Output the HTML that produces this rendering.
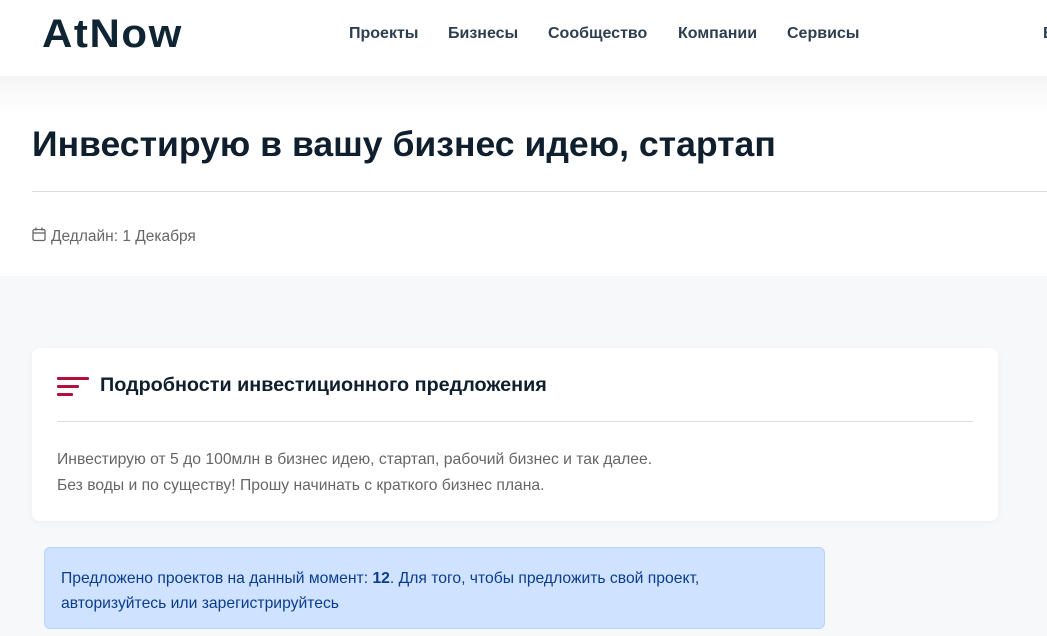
<!DOCTYPE html>
<html><head><meta charset="utf-8"><style>
*{margin:0;padding:0;box-sizing:border-box}
body{width:1047px;height:636px;overflow:hidden;background:#f7f8fa;font-family:"Liberation Sans",sans-serif;position:relative}
.hdr{position:absolute;left:0;top:0;width:1047px;height:76px;background:#fff}
.logo{position:absolute;left:42px;top:12px;font-size:40px;font-weight:bold;color:#0f2533;letter-spacing:1.5px;transform:scaleX(1.05);transform-origin:left}
.nav{position:absolute;top:25px;font-size:16px;font-weight:bold;color:#2d3e50}
.top{position:absolute;left:0;top:76px;width:1047px;height:200px;background:linear-gradient(#f4f4f4,#fbfbfb 20px,#fff 40px)}
h1{position:absolute;left:32px;top:124px;font-size:35.6px;font-weight:bold;color:#0f1f2e}
.hr{position:absolute;left:32px;top:191px;width:1015px;height:1px;background:#dcdcdc}
.dl{position:absolute;left:32px;top:227px;font-size:15.5px;color:#666;letter-spacing:0}
.card{position:absolute;left:32px;top:348px;width:966px;height:173px;background:#fff;border-radius:8px;box-shadow:0 2px 8px rgba(0,0,0,.04)}
.ct{position:absolute;left:68px;top:26px;font-size:19.8px;font-weight:bold;color:#0f1f2e}
.chr{position:absolute;left:25px;top:73px;width:916px;height:1px;background:#ddd}
.cb{position:absolute;left:25px;top:99px;font-size:15.7px;line-height:26px;color:#666}
.info{position:absolute;left:44px;top:547px;width:781px;height:82px;background:#cfe2ff;border:1px solid #b6d4fe;border-radius:6px;padding:18px 110px 18px 16px;font-size:15.7px;line-height:25px;color:#0a3d8f}
</style></head><body>
<div class="hdr">
<div class="logo">AtNow</div>
<div class="nav" style="left:349px">Проекты</div>
<div class="nav" style="left:448px">Бизнесы</div>
<div class="nav" style="left:548px">Сообщество</div>
<div class="nav" style="left:678px">Компании</div>
<div class="nav" style="left:787px">Сервисы</div>
<div class="nav" style="left:1043px">Войти</div>
</div>
<div class="top"></div>
<h1>Инвестирую в вашу бизнес идею, стартап</h1>
<div class="hr"></div>
<div class="dl"><svg width="14" height="15" viewBox="0 0 14 15" style="vertical-align:-1px;margin-right:5px"><rect x="1" y="2.5" width="12" height="11" rx="1.5" fill="none" stroke="#666" stroke-width="1.3"/><line x1="1" y1="6" x2="13" y2="6" stroke="#666" stroke-width="1.3"/><line x1="4" y1="0.5" x2="4" y2="3.5" stroke="#666" stroke-width="1.3"/><line x1="10" y1="0.5" x2="10" y2="3.5" stroke="#666" stroke-width="1.3"/></svg>Дедлайн: 1 Декабря</div>
<div class="card">
<svg style="position:absolute;left:25px;top:29px" width="32" height="20" viewBox="0 0 32 20"><rect x="0" y="0" width="32" height="3" rx="1" fill="#b0103a"/><rect x="0" y="8" width="22" height="3" rx="1" fill="#b0103a"/><rect x="0" y="16" width="16" height="3" rx="1" fill="#b0103a"/></svg>
<div class="ct">Подробности инвестиционного предложения</div>
<div class="chr"></div>
<div class="cb">Инвестирую от 5 до 100млн в бизнес идею, стартап, рабочий бизнес и так далее.<br>Без воды и по существу! Прошу начинать с краткого бизнес плана.</div>
</div>
<div class="info">Предложено проектов на данный момент: <b>12</b>. Для того, чтобы предложить свой проект, авторизуйтесь или зарегистрируйтесь</div>
</body></html>
